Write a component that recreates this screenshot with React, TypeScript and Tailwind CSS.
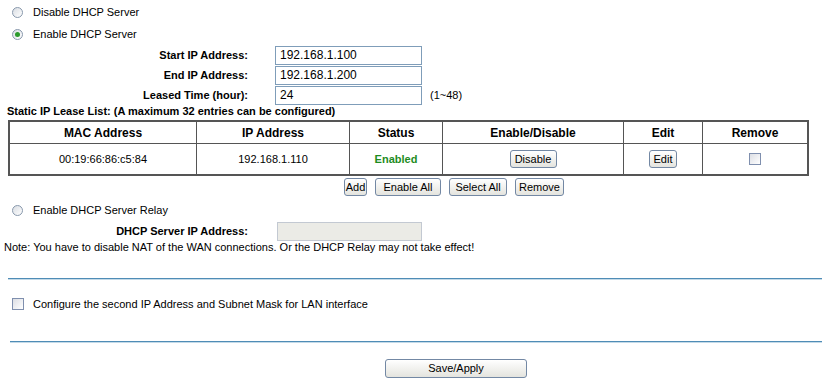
import type { ReactNode } from 'react';

function Radio({ checked }: { checked?: boolean }) {
  return (
    <span className="w-[11px] h-[11px] rounded-full border border-[#8898ac] bg-linear-to-br from-[#d9dde3] to-white flex items-center justify-center shrink-0">
      {checked && <span className="w-[5px] h-[5px] rounded-full bg-[#2b9a2b]" />}
    </span>
  );
}

function Check() {
  return (
    <span className="w-[12px] h-[12px] border border-[#7f8fae] bg-linear-to-br from-[#dcdee4] to-white shrink-0" />
  );
}

function Btn({ children, className }: { children: ReactNode; className?: string }) {
  return (
    <button className={'h-[18px] border border-[#7388a4] rounded-[3px] bg-linear-to-b from-white to-[#e4e4de] text-[11px] leading-none text-black flex items-center justify-center ' + (className ?? '')}>
      {children}
    </button>
  );
}

function Field({ label, value, disabled, note }: { label: string; value?: string; disabled?: boolean; note?: string }) {
  return (
    <div className="h-[20px] flex items-center">
      <span className="w-[248px] text-right font-bold">{label}</span>
      <div
        className={
          disabled
            ? 'ml-[29px] w-[145px] h-[19px] border border-[#c3c9d2] bg-[#ebebe6]'
            : 'ml-[27px] w-[147px] h-[19px] border border-[#7f9db9] bg-white flex items-center pl-[4px] text-[12px]'
        }
      >
        {value}
      </div>
      {note && <span className="ml-[8px]">{note}</span>}
    </div>
  );
}

const head = 'h-[21px] flex items-center justify-center font-bold text-[12px]';
const cell = 'h-[31px] flex items-center justify-center border-t border-[#555]';

export default function App() {
  return (
    <div className="w-[822px] h-[384px] overflow-hidden bg-white">
      <div className="w-[908px] font-['Liberation_Sans',Arial,sans-serif] text-[11px] text-black">
        <div className="pt-[1px]">
          <label className="h-[22px] flex items-center pl-[12px] gap-[10px]">
            <Radio />
            Disable DHCP Server
          </label>
          <label className="h-[22px] flex items-center pl-[12px] gap-[10px]">
            <Radio checked />
            Enable DHCP Server
          </label>
        </div>

        <Field label="Start IP Address:" value="192.168.1.100" />
        <Field label="End IP Address:" value="192.168.1.200" />
        <Field label="Leased Time (hour):" value="24" note="(1~48)" />

        <div className="h-[13px] flex items-center pl-[7px] font-bold">
          Static IP Lease List: (A maximum 32 entries can be configured)
        </div>

        <div className="mt-[2px] ml-[8px] w-[801px] border-2 border-[#555] grid grid-cols-[186px_153px_93px_181px_79px_105px]">
          <div className={head}>MAC Address</div>
          <div className={head + ' border-l border-[#555]'}>IP Address</div>
          <div className={head + ' border-l border-[#555]'}>Status</div>
          <div className={head + ' border-l border-[#555]'}>Enable/Disable</div>
          <div className={head + ' border-l border-[#555]'}>Edit</div>
          <div className={head + ' border-l border-[#555]'}>Remove</div>

          <div className={cell}>00:19:66:86:c5:84</div>
          <div className={cell + ' border-l'}>192.168.1.110</div>
          <div className={cell + ' border-l font-bold text-[#1e8c1e]'}>Enabled</div>
          <div className={cell + ' border-l'}>
            <Btn className="w-[47px] h-[17px]">Disable</Btn>
          </div>
          <div className={cell + ' border-l'}>
            <Btn className="w-[28px] h-[17px]">Edit</Btn>
          </div>
          <div className={cell + ' border-l'}>
            <Check />
          </div>
        </div>

        <div className="mt-[2px] flex justify-center gap-[8px]">
          <Btn className="w-[23px]">Add</Btn>
          <Btn className="w-[66px]">Enable All</Btn>
          <Btn className="w-[58px]">Select All</Btn>
          <Btn className="w-[49px]">Remove</Btn>
        </div>

        <label className="mt-[3px] h-[22px] flex items-center pl-[12px] gap-[10px]">
          <Radio />
          Enable DHCP Server Relay
        </label>
        <Field label="DHCP Server IP Address:" disabled />
        <div className="h-[12px] flex items-center pl-[4px]">
          Note: You have to disable NAT of the WAN connections. Or the DHCP Relay may not take effect!
        </div>

        <div className="mt-[25px] ml-[8px]">
          <div className="h-px bg-[#4f8cb6]" />
          <div className="h-px bg-[#c4dae8]" />
        </div>

        <label className="mt-[13px] h-[22px] flex items-center pl-[12px] gap-[9px]">
          <Check />
          Configure the second IP Address and Subnet Mask for LAN interface
        </label>

        <div className="mt-[26px] ml-[10px]">
          <div className="h-px bg-[#4f8cb6]" />
          <div className="h-px bg-[#c4dae8]" />
        </div>

        <div className="mt-[16px] flex justify-center pl-[4px]">
          <Btn className="w-[142px] h-[19px]">Save/Apply</Btn>
        </div>
      </div>
    </div>
  );
}
